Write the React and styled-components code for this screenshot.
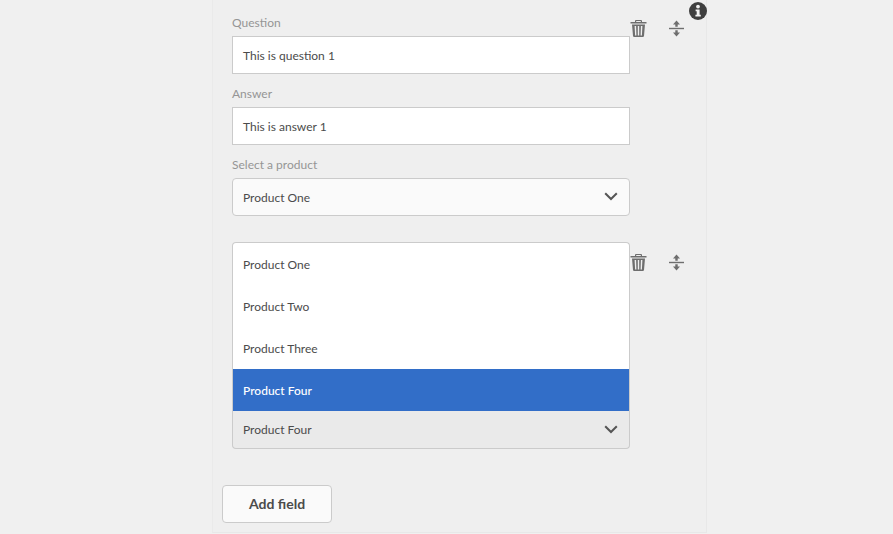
import React from 'react'
import styled, { createGlobalStyle } from 'styled-components'

const Global = createGlobalStyle`
  html, body { margin: 0; padding: 0; background: #f0f0f0; }
  body { font-family: Lato, "Open Sans", sans-serif; height: 534px; overflow: hidden; }
`

const Panel = styled.div`
  position: relative;
  box-sizing: border-box;
  width: 495px;
  height: 533px;
  margin-left: 212px;
  padding: 14px 0 0 9px;
  background: #efefef;
  border-left: 1px solid #eaeaea;
  border-right: 1px solid #e8e8e8;
  border-bottom: 1px solid #e8e8e8;
`

const InfoBadge = styled.svg`
  position: absolute;
  top: 2px;
  right: -1px;
  width: 18px;
  height: 18px;
`

const Group = styled.div`
  display: flex;
  align-items: flex-start;
  padding-left: 10px;
`

const SecondGroup = styled(Group)`
  margin-top: 26px;
  height: 207px;
`

const Fields = styled.div`
  width: 398px;
  display: flex;
  flex-direction: column;
  gap: 11px;
`

const BottomFields = styled(Fields)`
  position: relative;
  height: 100%;
  justify-content: flex-end;
`

const Field = styled.div`
  display: flex;
  flex-direction: column;
`

const Label = styled.label`
  height: 22px;
  line-height: 17px;
  font-size: 12px;
  color: #959595;
`

const Input = styled.div`
  box-sizing: border-box;
  height: 38px;
  padding-left: 10px;
  line-height: 37px;
  font-size: 12px;
  color: #4b4b4b;
  background: #fff;
  border: 1px solid #cbcbcb;
`

const Select = styled.div`
  box-sizing: border-box;
  height: 38px;
  display: flex;
  align-items: center;
  justify-content: space-between;
  padding: 0 11px 0 10px;
  font-size: 12px;
  color: #4b4b4b;
  background: ${p => (p.$open ? '#eaeaea' : '#fafafa')};
  border: 1px solid #cbcbcb;
  border-radius: ${p => (p.$open ? '0 0 4px 4px' : '4px')};
  ${p => p.$open && 'border-top: none;'}
`

const Menu = styled.ul`
  position: absolute;
  left: 0;
  right: 0;
  bottom: 38px;
  margin: 0;
  padding: 0;
  list-style: none;
  background: #fff;
  border: 1px solid #cbcbcb;
  border-bottom: none;
  border-radius: 4px 4px 0 0;
`

const Option = styled.li`
  height: 42px;
  line-height: 44px;
  padding-left: 10px;
  font-size: 12px;
  color: ${p => (p.$selected ? '#fff' : '#4b4b4b')};
  background: ${p => (p.$selected ? '#326ec8' : 'transparent')};
  font-weight: ${p => (p.$selected ? 500 : 400)};
`

const Actions = styled.div`
  display: flex;
  gap: 19px;
  margin: 5px 0 0 -1px;
`

const ActionsLow = styled(Actions)`
  margin-top: 11px;
`

const IconBox = styled.svg`
  width: 19px;
  height: 19px;
  display: block;
  fill: #6e6e6e;
`

const Chevron = styled.svg`
  width: 14px;
  height: 9px;
  margin-top: -1px;
  fill: none;
  stroke: #555;
  stroke-width: 2;
`

const AddButton = styled.button`
  display: block;
  width: 110px;
  height: 38px;
  margin: 36px 0 0 0;
  padding: 0 0 2px;
  font-family: Lato, "Open Sans", sans-serif;
  font-size: 14px;
  font-weight: 700;
  color: #4b4b4b;
  background: #fafafa;
  border: 1px solid #cbcbcb;
  border-radius: 4px;
`

const Trash = () => (
  <IconBox viewBox="0 0 19 19">
    <path d="M7 1h5a1 1 0 0 1 1 1v1h4.5v1.5h-16V3H6V2a1 1 0 0 1 1-1zm.2 1.1V3h4.6v-.9z" />
    <path d="M3 5.5h13L15 17a1.2 1.2 0 0 1-1.2 1H5.2A1.2 1.2 0 0 1 4 17zm2.6 1.4.5 9.6h1.3l-.3-9.6zm3.2 0v9.6h1.4V6.9zm3.1 0-.3 9.6h1.3l.5-9.6z" />
  </IconBox>
)

const Collapse = () => (
  <IconBox viewBox="0 0 19 19">
    <path d="M9.5 1.5 13 5.5h-2.3v2.2H8.3V5.5H6z" />
    <rect x="2" y="8.8" width="15" height="1.4" />
    <path d="M9.5 17.5 13 13.5h-2.3v-2.2H8.3v2.2H6z" />
  </IconBox>
)

const Arrow = () => (
  <Chevron viewBox="0 0 14 9">
    <path d="M1.2 1.2 7 7l5.8-5.8" />
  </Chevron>
)

const products = ['Product One', 'Product Two', 'Product Three', 'Product Four']

export default function App() {
  return (
    <>
      <Global />
      <Panel>
        <InfoBadge viewBox="0 0 18 18">
          <circle cx="9" cy="9" r="9" fill="#3f3f3f" />
          <circle cx="9" cy="4.6" r="1.9" fill="#f2f2f2" />
          <path d="M6.6 7.4h4v5.4h1.2v1.8H6.4v-1.8h1.3V9.2H6.6z" fill="#f2f2f2" />
        </InfoBadge>

        <Group>
          <Fields>
            <Field>
              <Label>Question</Label>
              <Input>This is question 1</Input>
            </Field>
            <Field>
              <Label>Answer</Label>
              <Input>This is answer 1</Input>
            </Field>
            <Field>
              <Label>Select a product</Label>
              <Select>
                Product One
                <Arrow />
              </Select>
            </Field>
          </Fields>
          <Actions>
            <Trash />
            <Collapse />
          </Actions>
        </Group>

        <SecondGroup>
          <BottomFields>
            <Menu>
              {products.map(name => (
                <Option key={name} $selected={name === 'Product Four'}>
                  {name}
                </Option>
              ))}
            </Menu>
            <Select $open>
              Product Four
              <Arrow />
            </Select>
          </BottomFields>
          <ActionsLow>
            <Trash />
            <Collapse />
          </ActionsLow>
        </SecondGroup>

        <AddButton>Add field</AddButton>
      </Panel>
    </>
  )
}
